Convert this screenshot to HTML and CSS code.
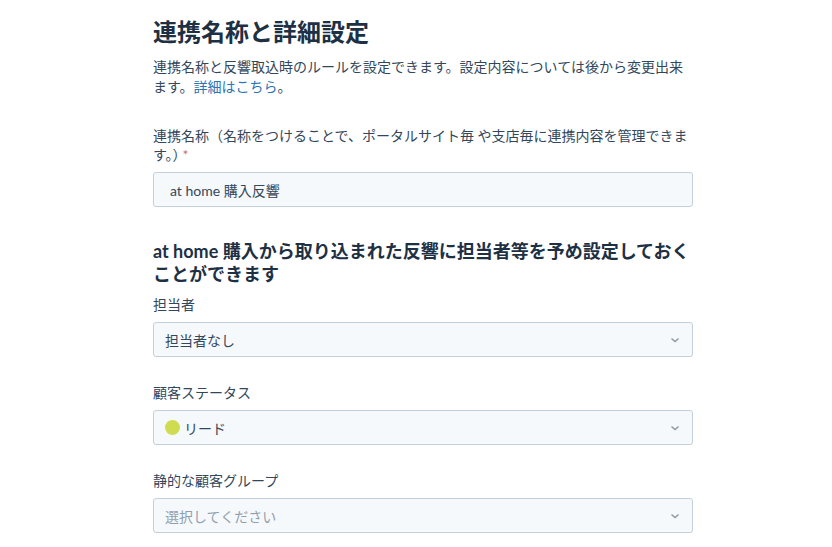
FILE: index.html
```html
<!DOCTYPE html>
<html lang="ja">
<head>
	<meta charset="UTF-8">
	<title>連携名称と詳細設定</title>
	<link rel="stylesheet" href="styles.css">
</head>
<body>
	<div class="page">
		<!-- 連携名称 -->
		<h1 class="title">連携名称と詳細設定</h1>
		<p class="lead">連携名称と反響取込時のルールを設定できます。設定内容については後から変更出来ます。<a href="#">詳細はこちら</a>。</p>

		<div class="field">
			<label class="label">連携名称（名称をつけることで、ポータルサイト毎 や支店毎に連携内容を管理できます。）<span class="req">*</span></label>
			<div class="input">at home 購入反響</div>
		</div>

		<!-- 詳細設定 -->
		<h2 class="subtitle">at home 購入から取り込まれた反響に担当者等を予め設定しておくことができます</h2>

		<div class="field">
			<label class="label">担当者</label>
			<div class="select">
				<span>担当者なし</span>
				<svg class="chev" width="10" height="6" viewBox="0 0 10 6"><path d="M1.5 1.5 5 4.5 8.5 1.5" fill="none" stroke="#8a99a8" stroke-width="1.4"/></svg>
			</div>
		</div>

		<div class="field">
			<label class="label">顧客ステータス</label>
			<div class="select">
				<span><i class="dot"></i>リード</span>
				<svg class="chev" width="10" height="6" viewBox="0 0 10 6"><path d="M1.5 1.5 5 4.5 8.5 1.5" fill="none" stroke="#8a99a8" stroke-width="1.4"/></svg>
			</div>
		</div>

		<div class="field">
			<label class="label">静的な顧客グループ</label>
			<div class="select">
				<span class="placeholder">選択してください</span>
				<svg class="chev" width="10" height="6" viewBox="0 0 10 6"><path d="M1.5 1.5 5 4.5 8.5 1.5" fill="none" stroke="#8a99a8" stroke-width="1.4"/></svg>
			</div>
		</div>
	</div>
</body>
</html>
```

FILE: styles.css
```css
body {
	margin: 0;
	background: #fff;
	color: #33475b;
	font-family: "Lato", "Noto Sans CJK JP", sans-serif;
	font-size: 14px;
}

.page {
	width: 540px;
	margin: 0 auto 0 153px;
	padding-top: 16px;
}

.title {
	margin: 0;
	font-size: 24px;
	line-height: 32px;
	font-weight: 700;
	color: #1d3044;
}

.lead {
	margin: 9px 0 0;
	line-height: 20px;
}
.lead a {
	color: #2a75b6;
	text-decoration: none;
}

.field {
	margin-top: 26px;
}
.lead + .field {
	margin-top: 29px;
}
.label {
	display: block;
	line-height: 19px;
	margin-bottom: 8px;
}
.req {
	color: #c96e76;
	margin-left: -4px;
}

.input,
.select {
	box-sizing: border-box;
	height: 35px;
	border: 1px solid #c3cfd9;
	border-radius: 3px;
	background: #f6f9fb;
	display: flex;
	align-items: center;
}
.input {
	padding: 0 16px;
}
.select {
	padding: 0 12px 0 11px;
	justify-content: space-between;
}
.select span {
	display: flex;
	align-items: center;
}
.placeholder {
	color: #8f9fae;
}
.dot {
	flex: none;
	width: 15px;
	height: 15px;
	border-radius: 50%;
	background: #d0dc50;
	margin-right: 4px;
}

.subtitle {
	margin: 33px 0 0;
	font-size: 18px;
	line-height: 23px;
	font-weight: 700;
	color: #1d3044;
}
.subtitle + .field {
	margin-top: 9px;
}
```
